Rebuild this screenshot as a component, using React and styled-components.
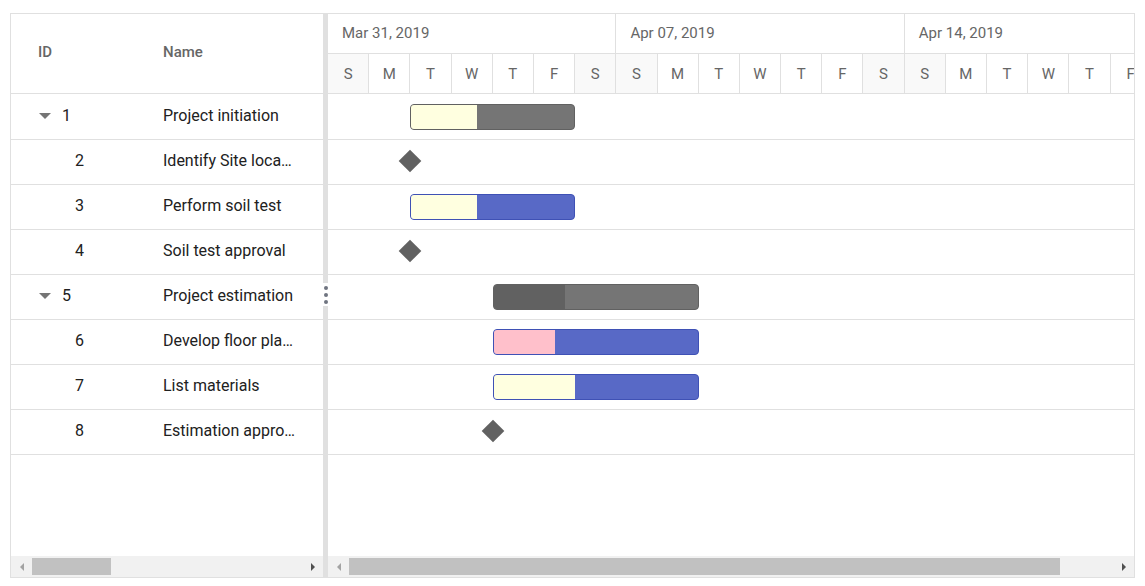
import React from "react";
import styled, { createGlobalStyle } from "styled-components";

const DAY = 41.2;

const GlobalStyle = createGlobalStyle`
  body {
    margin: 0;
    background: #fff;
    font-family: Roboto, "Liberation Sans", sans-serif;
  }
`

const Page = styled.div`
  padding: 13px 10px;
`

const Gantt = styled.div`
  width: 1125px;
  height: 565px;
  box-sizing: border-box;
  border: 1px solid #e0e0e0;
  display: flex;
  overflow: hidden;
`

const LeftPane = styled.div`
  width: 312px;
  display: flex;
  flex-direction: column;
`

const Splitter = styled.div`
  width: 5px;
  background: #e0e0e0;
  position: relative;
`

const Handle = styled.div`
  position: absolute;
  left: 0;
  top: 269px;
  width: 5px;
  height: 23px;
  background: #fff;
  display: flex;
  flex-direction: column;
  align-items: center;
  justify-content: center;
  gap: 3px;
`

const Dot = styled.span`
  width: 4px;
  height: 4px;
  border-radius: 50%;
  background: #6f7480;
`

const RightPane = styled.div`
  flex: 1;
  display: flex;
  flex-direction: column;
  overflow: hidden;
`

const GridHeader = styled.div`
  height: 80px;
  box-sizing: border-box;
  border-bottom: 1px solid #e0e0e0;
  padding-bottom: 4px;
  display: flex;
  align-items: center;
  font-size: 15px;
  font-weight: 500;
  color: #666;
`

const IdHead = styled.div`
  width: 140px;
  padding-left: 27px;
  box-sizing: border-box;
`

const NameHead = styled.div`
  padding-left: 12px;
`

const Body = styled.div`
  flex: 1;
  padding-top: 1px;
`

const GridRow = styled.div`
  height: 45px;
  box-sizing: border-box;
  border-bottom: 1px solid #e0e0e0;
  padding-bottom: 3px;
  display: flex;
  align-items: center;
  font-size: 16px;
  color: #212121;
`

const IdCell = styled.div`
  width: 140px;
  box-sizing: border-box;
  padding-left: ${p => (p.$parent ? 28 : 64)}px;
  display: flex;
  align-items: center;
  gap: 11px;
`

const Caret = styled.span`
  width: 0;
  height: 0;
  border-left: 6px solid transparent;
  border-right: 6px solid transparent;
  border-top: 6px solid #757575;
`

const NameCell = styled.div`
  width: 172px;
  box-sizing: border-box;
  padding: 0 27px 0 12px;
  white-space: nowrap;
  overflow: hidden;
  text-overflow: ellipsis;
`

const Scrollbar = styled.div`
  height: 21px;
  background: #f1f1f1;
  display: flex;
  align-items: center;
`

const ArrowBtn = styled.div`
  width: 21px;
  height: 21px;
  display: flex;
  align-items: center;
  justify-content: center;
  &::before {
    content: "";
    width: 0;
    height: 0;
    border-top: 4px solid transparent;
    border-bottom: 4px solid transparent;
    ${p => (p.$dir === "left"
      ? "border-right: 4px solid #a3a3a3;"
      : "border-left: 4px solid #505050;")}
  }
`

const Track = styled.div`
  flex: 1;
  height: 21px;
  display: flex;
  align-items: center;
`

const Thumb = styled.div`
  height: 17px;
  width: ${p => p.$w}px;
  background: #c1c1c1;
`

const TimelineHeader = styled.div`
  height: 80px;
  box-sizing: border-box;
  border-bottom: 1px solid #e0e0e0;
  display: flex;
  flex-direction: column;
`

const WeekRow = styled.div`
  height: 40px;
  box-sizing: border-box;
  border-bottom: 1px solid #e0e0e0;
  display: flex;
  flex-shrink: 0;
`

const WeekCell = styled.div`
  width: ${DAY * 7}px;
  flex-shrink: 0;
  box-sizing: border-box;
  border-right: 1px solid #e0e0e0;
  padding: 0 0 2px 14px;
  display: flex;
  align-items: center;
  font-size: 15px;
  color: #666;
  white-space: nowrap;
`

const DayRow = styled.div`
  height: 39px;
  display: flex;
`

const DayCell = styled.div`
  width: ${DAY}px;
  flex-shrink: 0;
  box-sizing: border-box;
  border-right: 1px solid #e0e0e0;
  background: ${p => (p.$weekend ? "#f9f9f9" : "#fff")};
  display: flex;
  align-items: center;
  justify-content: center;
  font-size: 15px;
  color: #666;
  overflow: hidden;
`

const ChartRow = styled.div`
  height: 45px;
  box-sizing: border-box;
  border-bottom: 1px solid #e0e0e0;
  position: relative;
`

const Bar = styled.div`
  position: absolute;
  top: 9px;
  height: 26px;
  box-sizing: border-box;
  border-radius: 4px;
  overflow: hidden;
  border: 1px solid ${p => (p.$kind === "child" ? "#3f51b5" : "#616161")};
  background: ${p => (p.$kind === "child" ? "#5869c6" : "#757575")};
`

const Progress = styled.div`
  height: 100%;
  background: ${p => p.$color};
`

const Milestone = styled.div`
  position: absolute;
  top: 13px;
  width: 16px;
  height: 16px;
  margin-left: -8px;
  background: #616161;
  transform: rotate(45deg);
`

const tasks = [
  { id: 1, name: "Project initiation", parent: true, start: 2, dur: 4, progress: 40, color: "#ffffe0" },
  { id: 2, name: "Identify Site location", milestone: 2 },
  { id: 3, name: "Perform soil test", child: true, start: 2, dur: 4, progress: 40, color: "#ffffe0" },
  { id: 4, name: "Soil test approval", milestone: 2 },
  { id: 5, name: "Project estimation", parent: true, start: 4, dur: 5, progress: 35, color: "#616161" },
  { id: 6, name: "Develop floor plan for estimation", child: true, start: 4, dur: 5, progress: 30, color: "#ffc0cb" },
  { id: 7, name: "List materials", child: true, start: 4, dur: 5, progress: 40, color: "#ffffe0" },
  { id: 8, name: "Estimation approval", milestone: 4 },
];

const weeks = ["Mar 31, 2019", "Apr 07, 2019", "Apr 14, 2019"];
const days = ["S", "M", "T", "W", "T", "F", "S"];

const ScrollBar = ({ thumb }) => (
  <Scrollbar>
    <ArrowBtn $dir="left" />
    <Track>
      <Thumb $w={thumb} />
    </Track>
    <ArrowBtn $dir="right" />
  </Scrollbar>
);

const App = () => {
  return (
    <Page>
      <GlobalStyle />
      <Gantt>
        <LeftPane>
          <GridHeader>
            <IdHead>ID</IdHead>
            <NameHead>Name</NameHead>
          </GridHeader>
          <Body>
            {tasks.map(t => (
              <GridRow key={t.id}>
                <IdCell $parent={t.parent}>
                  {t.parent && <Caret />}
                  {t.id}
                </IdCell>
                <NameCell>{t.name}</NameCell>
              </GridRow>
            ))}
          </Body>
          <ScrollBar thumb={79} />
        </LeftPane>
        <Splitter>
          <Handle>
            <Dot />
            <Dot />
            <Dot />
          </Handle>
        </Splitter>
        <RightPane>
          <TimelineHeader>
            <WeekRow>
              {weeks.map(w => (
                <WeekCell key={w}>{w}</WeekCell>
              ))}
            </WeekRow>
            <DayRow>
              {weeks.map((w, wi) =>
                days.map((d, di) => (
                  <DayCell key={wi + "-" + di} $weekend={di === 0 || di === 6}>
                    {d}
                  </DayCell>
                ))
              )}
            </DayRow>
          </TimelineHeader>
          <Body>
            {tasks.map(t => (
              <ChartRow key={t.id}>
                {t.milestone !== undefined ? (
                  <Milestone style={{ left: t.milestone * DAY }} />
                ) : (
                  <Bar
                    $kind={t.child ? "child" : "parent"}
                    style={{ left: t.start * DAY, width: t.dur * DAY }}
                  >
                    <Progress $color={t.color} style={{ width: t.progress + "%" }} />
                  </Bar>
                )}
              </ChartRow>
            ))}
          </Body>
          <ScrollBar thumb={711} />
        </RightPane>
      </Gantt>
    </Page>
  );
};

export default App;
